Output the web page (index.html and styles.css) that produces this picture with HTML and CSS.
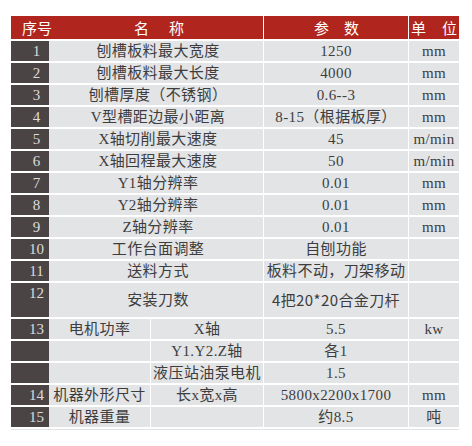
FILE: index.html
```html
<!DOCTYPE html>
<html lang="zh">
<head>
<meta charset="utf-8">
<link rel="stylesheet" href="styles.css">
</head>
<body>
<div class="spec">
  <div class="h h-no">序号</div>
  <div class="h h-name"><span>名</span><span>称</span></div>
  <div class="h h-val"><span>参</span><span>数</span></div>
  <div class="h h-unit"><span>单</span><span>位</span></div>

  <div class="c no">1</div><div class="c name">刨槽板料最大宽度</div><div class="c">1250</div><div class="c">mm</div>
  <div class="c no">2</div><div class="c name">刨槽板料最大长度</div><div class="c">4000</div><div class="c">mm</div>
  <div class="c no">3</div><div class="c name">刨槽厚度（不锈钢）</div><div class="c">0.6--3</div><div class="c">mm</div>
  <div class="c no">4</div><div class="c name">V型槽距边最小距离</div><div class="c">8-15（根据板厚）</div><div class="c">mm</div>
  <div class="c no">5</div><div class="c name">X轴切削最大速度</div><div class="c">45</div><div class="c">m/min</div>
  <div class="c no">6</div><div class="c name">X轴回程最大速度</div><div class="c">50</div><div class="c">m/min</div>
  <div class="c no">7</div><div class="c name">Y1轴分辨率</div><div class="c">0.01</div><div class="c">mm</div>
  <div class="c no">8</div><div class="c name">Y2轴分辨率</div><div class="c">0.01</div><div class="c">mm</div>
  <div class="c no">9</div><div class="c name">Z轴分辨率</div><div class="c">0.01</div><div class="c">mm</div>
  <div class="c no">10</div><div class="c name">工作台面调整</div><div class="c">自刨功能</div><div class="c"></div>
  <div class="c no">11</div><div class="c name">送料方式</div><div class="c">板料不动，刀架移动</div><div class="c"></div>
  <div class="c no top">12</div><div class="c name">安装刀数</div><div class="c sans">4把20*20合金刀杆</div><div class="c"></div>
  <div class="c no">13</div><div class="c">电机功率</div><div class="c">X轴</div><div class="c">5.5</div><div class="c">kw</div>
  <div class="c no"></div><div class="c"></div><div class="c">Y1.Y2.Z轴</div><div class="c">各1</div><div class="c"></div>
  <div class="c no"></div><div class="c"></div><div class="c">液压站油泵电机</div><div class="c">1.5</div><div class="c"></div>
  <div class="c no">14</div><div class="c">机器外形尺寸</div><div class="c">长x宽x高</div><div class="c">5800x2200x1700</div><div class="c">mm</div>
  <div class="c no">15</div><div class="c">机器重量</div><div class="c"></div><div class="c">约8.5</div><div class="c">吨</div>
  <div class="end"></div>
</div>
</body>
</html>
```
FILE: styles.css
```css
html, body {
  margin: 0;
  padding: 0;
  background: #ffffff;
}

body {
  padding: 16px 0 0 11px;
  font-family: "Liberation Serif", "Noto Sans CJK SC", serif;
  font-size: 15px;
  color: #3d3d3d;
}

.spec {
  display: grid;
  grid-template-columns: 37px 101px 112px 144px 50px;
  grid-template-rows: 23px repeat(11, 20px) 34px repeat(5, 20px) 1px;
  column-gap: 1px;
  row-gap: 2px;
  width: 448px;
}

.h {
  background: #b0261f;
  color: #ffffff;
  font-family: "Noto Sans CJK SC", sans-serif;
  font-size: 15px;
  display: flex;
  align-items: center;
  white-space: nowrap;
  line-height: 1;
}

.h-no {
  margin-right: -1px;
  padding-left: 11px;
  position: relative;
  z-index: 1;
}

.h-name {
  grid-column: span 2;
  justify-content: center;
  gap: 20px;
  padding-left: 6px;
}

.h-val {
  justify-content: center;
  gap: 15px;
  padding-left: 1px;
}

.h-unit {
  justify-content: center;
  gap: 16px;
}

.c {
  background: #e3e4e6;
  display: flex;
  align-items: center;
  justify-content: center;
  white-space: nowrap;
  line-height: 20px;
  letter-spacing: 0.4px;
}

.name {
  grid-column: span 2;
  padding-left: 4px;
}

.sans {
  font-family: "Noto Sans CJK SC", sans-serif;
}

.no {
  background: #4a4544;
  color: #dcdcdc;
  margin-right: -1px;
  padding-left: 13px;
  letter-spacing: 0;
}

.no.top {
  align-items: flex-start;
  padding-top: 0;
}

.end {
  grid-column: 1 / -1;
  background: #e2e3e5;
}
```
